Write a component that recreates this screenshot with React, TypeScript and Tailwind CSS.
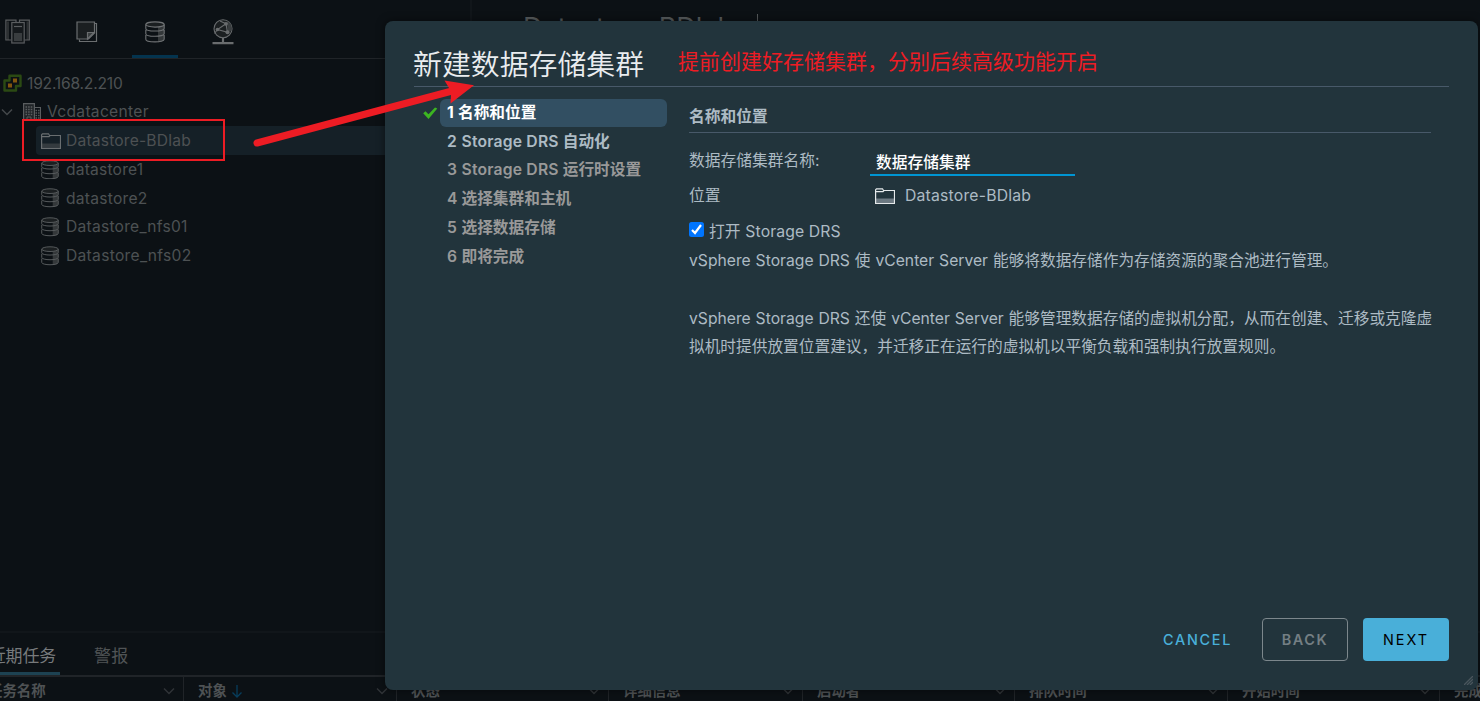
import React from 'react';

const FONT = "font-['Inter','Noto_Sans_CJK_SC',sans-serif]";

function HostsIcon() {
  return (
    <svg width="26" height="26" viewBox="0 0 26 26" fill="none" strokeWidth="1.200">
      <path d="M3 2.500v18.500M22.500 2.500v18.500" stroke="#2c3032" strokeWidth="2" />
      <path d="M6 21H.9V1.200H11v2.300M19.500 21h4.800V1.200H14.500v2.300" stroke="#5a5d5f" />
      <rect x="6.800" y="3.500" width="12.400" height="20.500" fill="#15191c" stroke="#5a5d5f" />
      <path d="M9 7.500h8" stroke="#5a5d5f" />
      <rect x="9" y="14" width="8" height="8" fill="#393d3f" />
    </svg>
  );
}

function VmIcon() {
  return (
    <svg width="22" height="22" viewBox="0 0 22 22" fill="none" stroke="#6b6e70" strokeWidth="1.200">
      <path d="M19 2.500h1.500v18H3.500V18.500" />
      <path d="M1 1h17.500v11l-6 6H1z" fill="#1b1f21" />
      <path d="M18 11.500h-6.500V18z" fill="#393d3f" />
    </svg>
  );
}

function DatabaseIcon({ size, color }: { size: number; color: string }) {
  return (
    <svg width={size} height={size * 1.1} viewBox="0 0 20 22" fill="none" stroke={color} strokeWidth="1.100" className="shrink-0">
      <path d="M13 5.500l6-1.500v15c-1 1.500-3 2-6 2.200z" fill="#34383a" stroke="none" />
      <ellipse cx="10" cy="3.500" rx="9.200" ry="2.600" fill="#1b1f21" />
      <path d="M.8 3.500v4c0 3.400 18.400 3.400 18.400 0v-4M.8 8.700v4c0 3.400 18.400 3.400 18.400 0v-4M.8 13.900v4.300c0 3.500 18.400 3.500 18.400 0v-4.300" />
    </svg>
  );
}

function NetworkIcon() {
  return (
    <svg width="22" height="26" viewBox="0 0 22 26" fill="none" stroke="#696c6e" strokeWidth="1.100">
      <circle cx="11" cy="9.800" r="9" fill="#1b1f21" />
      <path d="M14 4.800L5.500 10.500l10 2.800zM14 4.800L8 2M5.500 10.500l-3 4" />
      <path d="M15 1.800a9 9 0 0 1 4.500 10l-3.500 1.500z" fill="#393d3f" stroke="none" />
      <g fill="#696c6e" stroke="none">
        <circle cx="14" cy="4.800" r="1.900" /><circle cx="5.500" cy="10.500" r="1.800" /><circle cx="15.500" cy="13.300" r="2" />
      </g>
      <path d="M11 19v4M.5 24.200h21" strokeWidth="2.200" />
    </svg>
  );
}

function FolderIcon({ color, fill }: { color: string; fill: string }) {
  return (
    <svg width="20" height="16" viewBox="0 0 20 16" fill="none" stroke={color} className="shrink-0">
      <rect x="1" y="10.500" width="18" height="4" fill={fill} stroke="none" />
      <path d="M.6 15.300V1.800L1.500.8h6l1 1.700h11v12.800zM1 3.700h7l1-1.200" strokeWidth="1.200" />
    </svg>
  );
}

function VcenterIcon() {
  return (
    <svg width="19" height="18" viewBox="0 0 19 18" fill="none" className="shrink-0">
      <path d="M6.500 1.700h11v10.300h-4.500v4.500H1.500V6.500h5z" stroke="#2b4a13" strokeWidth="2.400" strokeLinejoin="round" />
      <rect x="10" y="4.500" width="4" height="4" fill="#82560f" />
      <rect x="5" y="9.500" width="4" height="4" fill="#82560f" />
    </svg>
  );
}

function DatacenterIcon() {
  return (
    <svg width="18" height="18" viewBox="0 0 18 18" fill="none" stroke="#5a5d5f" className="shrink-0">
      <rect x="1" y="1" width="10" height="16.500" fill="#202427" stroke="none" />
      <path d="M.6 17.500V.6h10.800v16.900zM11.500 4.500h6v13h-6" strokeWidth="1.200" />
      <path d="M2.500 4h7M2.500 6.500h7M2.500 9h7M2.500 11.500h7M12.500 7.500h4M12.500 10h4M12.500 12.500h4M12.500 15h4" strokeWidth="1.300" strokeDasharray="1.600 1" />
      <path d="M4 17v-3h4v3" />
    </svg>
  );
}

function Chevron({ className = '' }: { className?: string }) {
  return (
    <svg width="12" height="8" viewBox="0 0 12 8" fill="none" strokeWidth="1.500" className={`shrink-0 ${className}`}>
      <path d="M1 1.500l5 5 5-5" />
    </svg>
  );
}

const stores = [
  { name: 'datastore1', cls: 'tracking-[0.200px]' },
  { name: 'datastore2', cls: 'tracking-[0.250px]' },
  { name: 'Datastore_nfs01', cls: 'tracking-[0.250px]' },
  { name: 'Datastore_nfs02', cls: 'tracking-[0.300px]' },
];

const columns = [
  { label: '任务名称', cls: 'w-[184px] pl-0 -indent-3' },
  { label: '对象', cls: 'w-[213px] pl-[14px]', sorted: true },
  { label: '状态', cls: 'w-[212px] pl-[14px]' },
  { label: '详细信息', cls: 'w-[194px] pl-[14px]' },
  { label: '启动者', cls: 'w-[212px] pl-[14px]' },
  { label: '排队时间', cls: 'w-[213px] pl-[14px]' },
  { label: '开始时间', cls: 'w-[212px] pl-[14px]' },
  { label: '完成时间', cls: 'w-[213px] pl-[14px]' },
];

const steps = [
  { n: '2', latin: 'Storage DRS', label: '自动化', cls: 'text-[#adbbc4]' },
  { n: '3', latin: 'Storage DRS', label: '运行时设置', cls: 'text-[#999]' },
  { n: '4', latin: '', label: '选择集群和主机', cls: 'text-[#999]' },
  { n: '5', latin: '', label: '选择数据存储', cls: 'text-[#999]' },
  { n: '6', latin: '', label: '即将完成', cls: 'text-[#999]' },
];

function Sidebar() {
  return (
    <aside className="flex w-[472px] shrink-0 flex-col border-r-2 border-[#11161a]">
      <nav className="flex h-[59px] border-b border-[#202428]">
        <div className="flex w-[63px] items-center pl-[5px] pt-[5px]"><HostsIcon /></div>
        <div className="flex w-[69px] items-center pl-[13px] pt-[5px]"><VmIcon /></div>
        <div className="flex w-[46px] items-center justify-center border-b-[3px] border-[#04344f] pt-[8px]"><DatabaseIcon size={20} color="#6f7274" /></div>
        <div className="flex w-[69px] items-center pl-[34px] pt-[5px]"><NetworkIcon /></div>
      </nav>
      <div className="flex flex-col pt-[9.800px] text-[15.600px] text-[#4d5153]">
        <div className="flex h-[28.800px] items-center pl-[3px]">
          <VcenterIcon /><span className="ml-[5px] tracking-[-0.200px]">192.168.2.210</span>
        </div>
        <div className="flex h-[28.800px] items-center pl-[1px]">
          <Chevron className="stroke-[#44484a]" /><span className="w-[10px]" /><DatacenterIcon /><span className="ml-[6px] tracking-[0.300px]">Vcdatacenter</span>
        </div>
        <div className="ml-[36px] flex h-[28.800px] items-center rounded-l bg-[#152027] pl-[5px]">
          <FolderIcon color="#696e70" fill="#343b3f" /><span className="ml-[5px] tracking-[0.200px]">Datastore-BDlab</span>
        </div>
        {stores.map((s) => (
          <div key={s.name} className="flex h-[28.800px] items-center pl-[41px]">
            <DatabaseIcon size={18} color="#575b5d" /><span className={`ml-[7px] ${s.cls}`}>{s.name}</span>
          </div>
        ))}
      </div>
    </aside>
  );
}

function TaskPanel() {
  return (
    <section className="h-[70px] shrink-0 border-t-2 border-[#11161a]">
      <div className="flex h-[44px] border-b-2 border-[#202428] text-[17px] tracking-[-0.200px]">
        <div className="flex w-[60px] items-center justify-end overflow-hidden whitespace-nowrap border-b-[3px] border-[#1d4252] pr-[4px] pt-[8px] text-[#777a7c]"><span className="shrink-0">近期任务</span></div>
        <div className="flex items-center pl-[34px] pt-[6px] tracking-[0.200px] text-[#505456]">警报</div>
      </div>
      <div className="flex h-[27px] text-[14.400px] font-bold text-[#4e5254]">
        {columns.map((c) => (
          <div key={c.label} className={`flex shrink-0 items-center border-r border-[#202428] ${c.cls}`}>
            <span className="pt-px leading-none">{c.label}</span>
            {c.sorted && (
              <svg width="10" height="13" viewBox="0 0 10 13" fill="none" stroke="#073d5b" strokeWidth="1.300" className="ml-[5px] mt-[2px]"><path d="M5 0v12M.5 7.500L5 12l4.500-4.500" /></svg>
            )}
            <Chevron className="ml-auto mr-[8px] stroke-[#303437]" />
          </div>
        ))}
      </div>
    </section>
  );
}

function Wizard() {
  return (
    <div className="absolute left-[385px] top-[21px] flex h-[669px] w-[1093px] flex-col rounded-lg bg-[#22343c] px-[29px] shadow-[0_0_8px_rgba(0,0,0,0.5)]">
      <header className="flex h-[66px] shrink-0 items-center border-b border-[#485969] pt-[18px]">
        <h1 className="-ml-px w-[265px] whitespace-nowrap pt-[5px] text-[28.900px] font-[350] leading-none text-[#eaedf0]">新建数据存储集群</h1>
        <p className="-mt-[3px] whitespace-nowrap text-[21px] leading-none text-[#ed1c24]">提前创建好存储集群，分别后续高级功能开启</p>
      </header>
      <div className="flex flex-1">
        <ol className="ml-[7px] w-[246px] pt-[12px] text-[15.700px] font-semibold">
          <li className="flex h-[28px] items-center">
            <svg width="19" height="14" viewBox="0 0 19 14" className="shrink-0"><path d="M2.200 7.200l2.300-2 3 3L14 1.500l2.300 1L7.500 13z" fill="#3cb521" /></svg>
            <div className="flex h-full w-[227px] items-center gap-[4px] rounded-md bg-[#324f62] pl-[7px] font-bold text-white"><span className="w-[7px]">1</span><span>名称和位置</span></div>
          </li>
          {steps.map((s) => (
            <li key={s.n} className={`flex h-[28.800px] items-center gap-[4px] whitespace-nowrap pl-[26px] ${s.cls}`}>
              <span className="w-[10.500px]">{s.n}</span>
              {s.latin && <span className="tracking-[0.200px]">{s.latin}</span>}
              <span>{s.label}</span>
            </li>
          ))}
        </ol>
        <main className="ml-[22px] w-[743px] text-[15.750px] text-[#adbbc4]">
          <h2 className="flex h-[46px] w-[742px] items-center border-b border-[#485969] pt-[14px] font-semibold">名称和位置</h2>
          <div className="flex pt-[14px]">
            <label className="w-[181px] pt-[2px] leading-[24px]">数据存储集群名称:</label>
            <div className="flex h-[29px] w-[205px] items-center border-b-2 border-[#0095d3] pl-[6px] pt-[4px] font-medium text-white">数据存储集群</div>
          </div>
          <div className="flex h-[38px] items-center pt-px">
            <span className="w-[186px] pt-px">位置</span>
            <FolderIcon color="#e4e8ea" fill="#6c7982" /><span className="ml-[10px] pt-px tracking-[0.200px]">Datastore-BDlab</span>
          </div>
          <label className="flex h-[33px] items-center">
            <span className="-mt-[2px] flex h-[15px] w-[15px] items-center justify-center rounded-[2.500px] bg-[#0075ff]">
              <svg width="13" height="13" viewBox="0 0 13 13" fill="none" stroke="white" strokeWidth="2.200"><path d="M2 7l3 3 6-8" /></svg>
            </span>
            <span className="ml-[5px] pt-[2px] tracking-[0.120px]">打开 Storage DRS</span>
          </label>
          <div className="text-[15.700px] leading-[28.800px] [word-spacing:0.500px]">
            <p className="whitespace-nowrap">vSphere Storage DRS 使 vCenter Server 能够将数据存储作为存储资源的聚合池进行管理。</p>
            <p className="whitespace-nowrap pt-[28.800px]">vSphere Storage DRS 还使 vCenter Server 能够管理数据存储的虚拟机分配，从而在创建、迁移或克隆虚</p>
            <p className="whitespace-nowrap">拟机时提供放置位置建议，并迁移正在运行的虚拟机以平衡负载和强制执行放置规则。</p>
          </div>
        </main>
      </div>
      <footer className="flex h-[72px] shrink-0 items-start justify-end text-[14.400px] font-medium">
        <button className="h-[43px] pr-[30px] tracking-[1.700px] text-[#49afd9]">CANCEL</button>
        <button className="h-[43px] w-[86px] rounded-[4px] border border-[#7c878c] font-semibold tracking-[1.600px] text-[#747f84]">BACK</button>
        <button className="ml-[15px] h-[43px] w-[86px] rounded-[4px] bg-[#49afd9] font-normal tracking-[2px] text-black">NEXT</button>
      </footer>
      <svg width="9" height="9" viewBox="0 0 9 9" className="absolute bottom-[5px] right-[5px]" stroke="#4a565d" strokeWidth="1.300"><path d="M0 9L9 0M3 9l6-6M6 9l3-3" /></svg>
    </div>
  );
}

export default function App() {
  return (
    <div className={`relative flex h-[701px] w-[1480px] flex-col overflow-hidden bg-[#0c1115] ${FONT}`}>
      <div className="flex min-h-0 flex-1">
        <Sidebar />
        <div className="flex flex-1 items-start pl-[51px] pt-[14px]">
          <div className="flex border-r border-[#54585a] pr-[23px] text-[27px] leading-[28px] text-[#575b5d]">Datastore-BDlab</div>
        </div>
      </div>
      <TaskPanel />
      <Wizard />
      <div className="absolute left-[22px] top-[119px] h-[42px] w-[203px] border-2 border-[#ed1c24]" />
      <svg className="absolute left-[250px] top-[75px]" width="230" height="75" viewBox="250 75 230 75">
        <path d="M257 143L452 91" stroke="#ed1c24" strokeWidth="7" strokeLinecap="round" />
        <path d="M474 85.300L444.500 80.500 449 88 451 94 450.500 103.500z" fill="#ed1c24" />
      </svg>
    </div>
  );
}
